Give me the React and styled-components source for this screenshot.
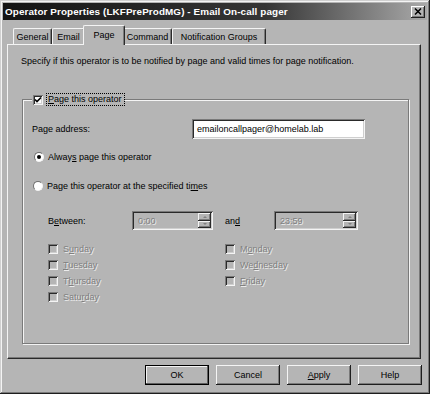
import styled, { createGlobalStyle } from "styled-components";

const Global = createGlobalStyle`
  html, body { margin: 0; padding: 0; background: #b5b5b5; }
  body { font-family: "Liberation Sans", Arial, sans-serif; font-size: 9px; color: #000; }
  * { box-sizing: border-box; }
`;

const FACE = "#b5b5b5";

const Window = styled.div`
  width: 430px;
  height: 394px;
  padding: 3px;
  background: ${FACE};
  display: flex;
  flex-direction: column;
  box-shadow: inset -1px -1px 0 #1e1e1e, inset 1px 1px 0 #d0d0d0,
    inset -2px -2px 0 #7a7a7a, inset 2px 2px 0 #f4f4f4;
`;

const TitleBar = styled.div`
  height: 17px;
  display: flex;
  align-items: center;
  justify-content: space-between;
  padding: 0 2px 0 2px;
  background: linear-gradient(to right, #141414 0%, #363636 62%, #a9a9a9 100%);
`;

const TitleText = styled.span`
  color: #fff;
  font-weight: bold;
  font-size: 9.9px;
  letter-spacing: 0.1px;
`;

const CloseBtn = styled.div`
  width: 14px;
  height: 12px;
  background: ${FACE};
  display: flex;
  align-items: center;
  justify-content: center;
  box-shadow: inset -1px -1px 0 #202020, inset 1px 1px 0 #fff,
    inset -2px -2px 0 #7a7a7a;
`;

const TabStrip = styled.div`
  height: 24px;
  display: flex;
  align-items: flex-end;
  padding-left: 10px;
`;

const Tab = styled.div`
  position: relative;
  width: ${(p) => p.$w}px;
  height: ${(p) => (p.$active ? 20 : 16)}px;
  margin: 0 ${(p) => (p.$active ? -2 : 0)}px ${(p) => (p.$active ? -1 : 0)}px;
  z-index: ${(p) => (p.$active ? 2 : 1)};
  display: flex;
  align-items: ${(p) => (p.$active ? "flex-start" : "center")};
  padding-top: ${(p) => (p.$active ? 4 : 0)}px;
  justify-content: center;
  background: ${FACE};
  border-top: 1px solid #f4f4f4;
  border-left: 1px solid #f4f4f4;
  border-right: 1px solid #2a2a2a;
  border-radius: 2px 2px 0 0;
  box-shadow: inset -1px 0 0 #7a7a7a;
  white-space: nowrap;
`;

const Panel = styled.div`
  height: 315px;
  margin: 0 6px 0 4px;
  padding: 10px 11px 14px 13px;
  display: flex;
  flex-direction: column;
  border-top: 1px solid #f4f4f4;
  border-left: 1px solid #f4f4f4;
  border-right: 1px solid #2a2a2a;
  border-bottom: 1px solid #2a2a2a;
  box-shadow: inset -1px -1px 0 #7a7a7a;
`;

const Desc = styled.div`
  line-height: 12px;
  height: 12px;
`;

const GroupBox = styled.div`
  position: relative;
  margin: 32px 0 0 1px;
  flex: 1;
  border: 1px solid #7a7a7a;
  box-shadow: inset 1px 1px 0 #f4f4f4, 1px 1px 0 #f4f4f4;
  display: flex;
  flex-direction: column;
  padding-top: 19px;
`;

const Legend = styled.div`
  position: absolute;
  top: -6px;
  left: 9px;
  display: flex;
  align-items: center;
  gap: 4px;
  padding: 0 1px 0 1px;
  background: ${FACE};
`;

const FocusLabel = styled.span`
  outline: 1px dotted #000;
  outline-offset: 0;
  padding: 0 2px 0 1px;
  line-height: 11px;
`;

const Row = styled.div`
  display: flex;
  align-items: center;
  height: ${(p) => p.$h || 16}px;
  margin-top: ${(p) => p.$mt || 0}px;
  padding-left: ${(p) => p.$pl || 0}px;
`;

const Label = styled.span`
  width: ${(p) => (p.$w ? `${p.$w}px` : "auto")};
  margin-left: ${(p) => p.$ml || 0}px;
  flex-shrink: 0;
  color: ${(p) => (p.$disabled ? "#808080" : "#000")};
  text-shadow: ${(p) => (p.$disabled ? "1px 1px 0 #ececec" : "none")};
  white-space: nowrap;
`;

const TextInput = styled.div`
  width: 173px;
  height: 20px;
  background: #fff;
  display: flex;
  align-items: center;
  padding-left: 5px;
  box-shadow: inset 1px 1px 0 #7a7a7a, inset -1px -1px 0 #f4f4f4,
    inset 2px 2px 0 #2a2a2a, inset -2px -2px 0 #cfcfcf;
`;

const RadioCircle = styled.span`
  width: 10px;
  height: 10px;
  border-radius: 50%;
  flex-shrink: 0;
  border: 1px solid;
  border-color: #6e6e6e #f4f4f4 #f4f4f4 #6e6e6e;
  background: #fff;
  display: flex;
  align-items: center;
  justify-content: center;
  margin-right: 4px;
  &::after {
    content: "";
    width: 4px;
    height: 4px;
    border-radius: 50%;
    background: ${(p) => (p.$checked ? "#000" : "transparent")};
  }
`;

const Box = styled.span`
  width: 10px;
  height: 10px;
  flex-shrink: 0;
  background: ${(p) => (p.$disabled ? FACE : "#fff")};
  box-shadow: inset 1px 1px 0 #7a7a7a, inset -1px -1px 0 #f4f4f4,
    inset 2px 2px 0 #2a2a2a, inset -2px -2px 0 #cfcfcf;
  display: flex;
  align-items: center;
  justify-content: center;
`;

const Spin = styled.div`
  width: ${(p) => p.$w}px;
  height: 19px;
  display: flex;
  padding: 2px;
  box-shadow: inset 1px 1px 0 #7a7a7a, inset -1px -1px 0 #f4f4f4,
    inset 2px 2px 0 #2a2a2a, inset -2px -2px 0 #cfcfcf;
`;

const SpinValue = styled.span`
  flex: 1;
  display: flex;
  align-items: center;
  padding-left: 4px;
  color: #808080;
  text-shadow: 1px 1px 0 #ececec;
`;

const SpinButtons = styled.div`
  width: 13px;
  display: flex;
  flex-direction: column;
`;

const SpinBtn = styled.div`
  flex: 1;
  display: flex;
  align-items: center;
  justify-content: center;
  background: ${FACE};
  box-shadow: inset -1px -1px 0 #2a2a2a, inset 1px 1px 0 #f4f4f4,
    inset -2px -2px 0 #7a7a7a;
  &::after {
    content: "";
    border-left: 2px solid transparent;
    border-right: 2px solid transparent;
    ${(p) => (p.$up ? "border-bottom" : "border-top")}: 2px solid #808080;
  }
`;

const DayGrid = styled.div`
  display: grid;
  grid-template-columns: 177px 1fr;
  grid-auto-rows: 16px;
  margin-top: 11px;
  padding-left: 25px;
`;

const Day = styled.div`
  display: flex;
  align-items: center;
  gap: 5px;
`;

const ButtonRow = styled.div`
  display: flex;
  justify-content: flex-end;
  gap: 7px;
  margin: 6px 5px 0 0;
`;

const Button = styled.div`
  width: 64px;
  height: 20px;
  display: flex;
  align-items: center;
  justify-content: center;
  background: ${FACE};
  box-shadow: ${(p) =>
    p.$default
      ? "inset 0 0 0 1px #000, inset -2px -2px 0 #5e5e5e, inset 2px 2px 0 #f4f4f4"
      : "inset -1px -1px 0 #1e1e1e, inset 1px 1px 0 #f4f4f4, inset -2px -2px 0 #7a7a7a"};
`;

const U = styled.u`
  text-decoration-thickness: 1px;
  text-underline-offset: 1px;
`;

const days = [
  ["S", "u", "nday"],
  ["M", "o", "nday"],
  ["", "T", "uesday"],
  ["We", "d", "nesday"],
  ["T", "h", "ursday"],
  ["", "F", "riday"],
  ["Satu", "r", "day"],
];

const tabs = [
  ["General", 39],
  ["Email", 33],
  ["Page", 38],
  ["Command", 49],
  ["Notification Groups", 94],
];

const Check = () => (
  <svg width="8" height="8" viewBox="0 0 8 8">
    <path d="M1 3.5 L3 5.5 L7 1.5" stroke="#000" strokeWidth="1.6" fill="none" />
  </svg>
);

export default function App() {
  return (
    <>
      <Global />
      <Window>
        <TitleBar>
          <TitleText>Operator Properties (LKFPreProdMG) - Email On-call pager</TitleText>
          <CloseBtn>
            <svg width="8" height="7" viewBox="0 0 8 7">
              <path d="M1 0.5 L7 6.5 M7 0.5 L1 6.5" stroke="#000" strokeWidth="1.5" />
            </svg>
          </CloseBtn>
        </TitleBar>

        <TabStrip>
          {tabs.map(([name, w]) => (
            <Tab key={name} $w={w + (name === "Page" ? 4 : 0)} $active={name === "Page"}>
              {name}
            </Tab>
          ))}
        </TabStrip>

        <Panel>
          <Desc>
            Specify if this operator is to be notified by page and valid times for page notification.
          </Desc>

          <GroupBox>
            <Legend>
              <Box>
                <Check />
              </Box>
              <FocusLabel>
                <U>P</U>age this operator
              </FocusLabel>
            </Legend>

            <Row $h={20} $pl={9}>
              <Label $w={160}>Page address:</Label>
              <TextInput>emailoncallpager@homelab.lab</TextInput>
            </Row>

            <Row $mt={10} $pl={11}>
              <RadioCircle $checked />
              <Label>
                Alway<U>s</U> page this operator
              </Label>
            </Row>

            <Row $mt={13} $pl={10}>
              <RadioCircle />
              <Label>
                Page this operator at the specified ti<U>m</U>es
              </Label>
            </Row>

            <Row $h={19} $mt={17} $pl={25}>
              <Label $w={84}>
                B<U>e</U>tween:
              </Label>
              <Spin $w={81}>
                <SpinValue>0:00</SpinValue>
                <SpinButtons>
                  <SpinBtn $up />
                  <SpinBtn />
                </SpinButtons>
              </Spin>
              <Label $w={49} $ml={12}>
                an<U>d</U>
              </Label>
              <Spin $w={84}>
                <SpinValue>23:59</SpinValue>
                <SpinButtons>
                  <SpinBtn $up />
                  <SpinBtn />
                </SpinButtons>
              </Spin>
            </Row>

            <DayGrid>
              {days.map(([a, u, b]) => (
                <Day key={a + u + b}>
                  <Box $disabled />
                  <Label $disabled>
                    {a}
                    <U>{u}</U>
                    {b}
                  </Label>
                </Day>
              ))}
            </DayGrid>
          </GroupBox>
        </Panel>

        <ButtonRow>
          <Button $default>OK</Button>
          <Button>Cancel</Button>
          <Button>
            <span>
              <U>A</U>pply
            </span>
          </Button>
          <Button>Help</Button>
        </ButtonRow>
      </Window>
    </>
  );
}
